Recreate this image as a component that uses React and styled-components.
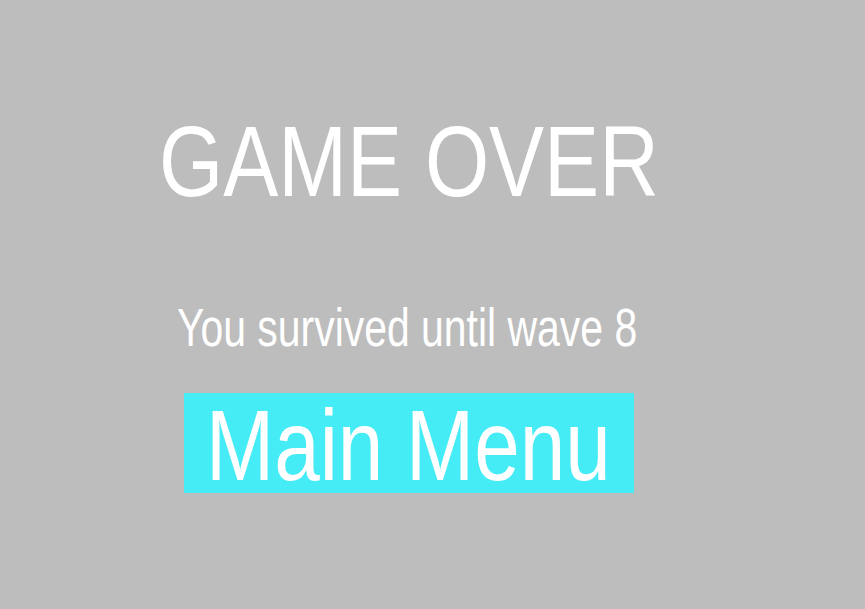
import styled, { createGlobalStyle } from 'styled-components'

const GlobalStyle = createGlobalStyle`
    html, body {
        margin: 0;
        padding: 0;
        background: #bdbdbd;
    }
    body {
        font-family: 'Liberation Sans', Arial, sans-serif;
        overflow: hidden;
    }
`

const Screen = styled.div`
    width: 817px;
    height: 609px;
    display: flex;
    flex-direction: column;
    align-items: center;
    padding-top: 111px;
    box-sizing: border-box;
    color: #ffffff;
`

// text in the game is drawn squeezed sideways
const Squeezed = styled.div`
    font-size: ${(p) => p.size}px;
    line-height: ${(p) => p.size}px;
    transform: scaleX(${(p) => p.squeeze});
    white-space: nowrap;
`

const Title = styled(Squeezed)`
    margin-bottom: 89px;
`

const Subtitle = styled(Squeezed)`
    margin-bottom: 39px;
    margin-right: 3px;
`

const MenuButton = styled.button`
    width: 450px;
    height: 100px;
    padding: 2px 0 0;
    border: none;
    background: #45ebf5;
    color: #ffffff;
    font-family: inherit;
    display: flex;
    justify-content: center;
    align-items: flex-start;
    cursor: pointer;
`

const App = () => {
    const wave = 8
    return (
        <>
            <GlobalStyle />
            <Screen>
                <Title size={101} squeeze={0.817}>
                    GAME OVER
                </Title>
                <Subtitle size={53} squeeze={0.772}>
                    You survived until wave {wave}
                </Subtitle>
                <MenuButton>
                    <Squeezed size={100} squeeze={0.818}>
                        Main Menu
                    </Squeezed>
                </MenuButton>
            </Screen>
        </>
    )
}

export default App
